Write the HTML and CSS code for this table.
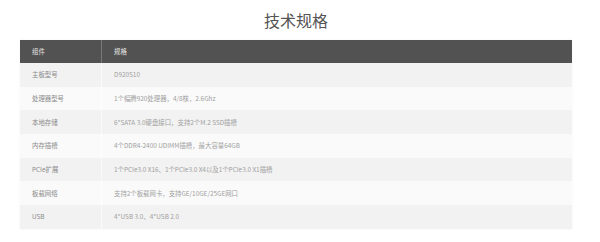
FILE: index.html
```html
<!DOCTYPE html>
<html lang="zh-CN">
<head>
<meta charset="utf-8">
<link rel="stylesheet" href="styles.css">
</head>
<body>
<div class="page">
  <h1 class="title">技术规格</h1>
  <div class="spec-table">
    <div class="row head"><div class="c1">组件</div><div class="c2">规格</div></div>
    <div class="row odd"><div class="c1">主板型号</div><div class="c2">D920S10</div></div>
    <div class="row even"><div class="c1">处理器型号</div><div class="c2">1个幅腾920处理器，4/8核，2.6Ghz</div></div>
    <div class="row odd"><div class="c1">本地存储</div><div class="c2">6*SATA 3.0硬盘接口，支持2个M.2 SSD插槽</div></div>
    <div class="row even"><div class="c1">内存插槽</div><div class="c2">4个DDR4-2400 UDIMM插槽，最大容量64GB</div></div>
    <div class="row odd"><div class="c1">PCIe扩展</div><div class="c2">1个PCIe3.0 X16、1个PCIe3.0 X4以及1个PCIe3.0 X1插槽</div></div>
    <div class="row even"><div class="c1">板载网络</div><div class="c2">支持2个板载网卡，支持GE/10GE/25GE网口</div></div>
    <div class="row odd"><div class="c1">USB</div><div class="c2">4*USB 3.0、4*USB 2.0</div></div>
  </div>
</div>
</body>
</html>
```
FILE: styles.css
```css
html, body {
  margin: 0;
  padding: 0;
  background: #ffffff;
}
body {
  font-family: "Noto Sans CJK SC", "Noto Sans", sans-serif;
  width: 600px;
  height: 242px;
  overflow: hidden;
}
.page {
  padding: 0 28px 0 20px;
}
.title {
  margin: 0;
  height: 40px;
  line-height: 40px;
  text-align: center;
  font-size: 16px;
  font-weight: 400;
  color: #555555;
}
.spec-table {
  width: 552px;
  display: flex;
  flex-direction: column;
  box-shadow: 0 0 2px rgba(0,0,0,0.06);
}
.row {
  display: grid;
  grid-template-columns: 82px 1fr;
  height: 23.7px;
  align-items: center;
  font-size: 6.4px;
  color: #a0a0a0;
}
.row > div {
  padding-left: 12px;
  height: 100%;
  display: flex;
  align-items: center;
}
.row .c1 {
  border-right: 1px solid rgba(255,255,255,0.6);
  color: #8a8a8a;
}
.head {
  height: 23px;
  background: #525252;
  color: #e6e6e6;
}
.head .c1 {
  border-right: 1px solid #7a7a7a;
  color: #e6e6e6;
}
.odd { background: #f2f2f2; }
.even { background: #fafafa; }
```
